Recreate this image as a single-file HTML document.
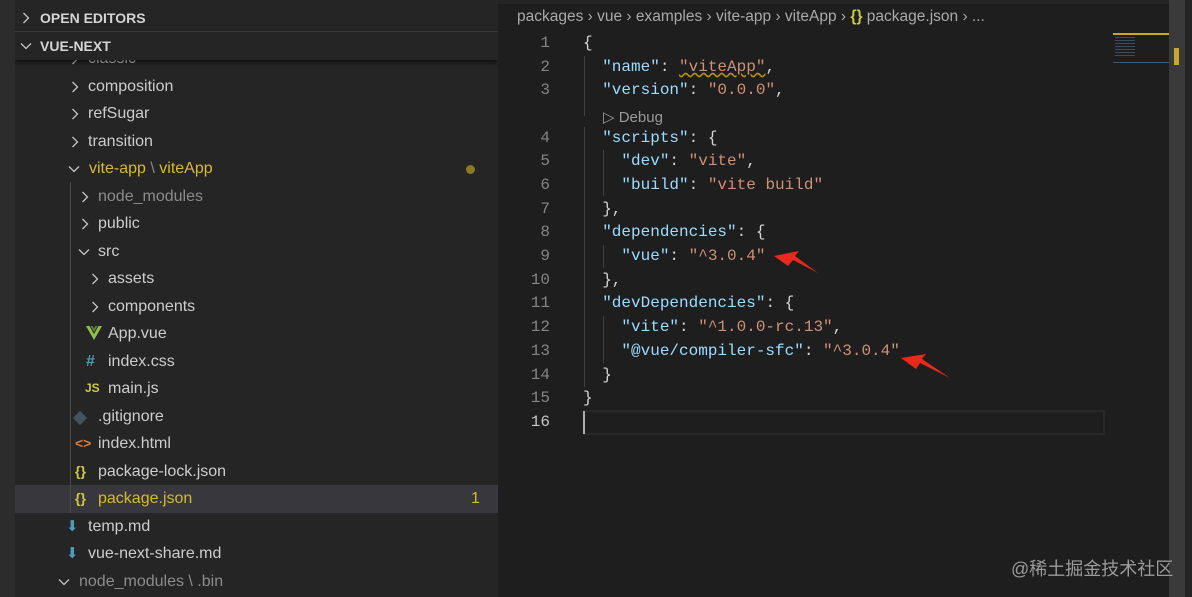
<!DOCTYPE html>
<html><head><meta charset="utf-8"><style>
*{margin:0;padding:0;box-sizing:border-box}
body{width:1192px;height:597px;overflow:hidden;background:#1e1e1e;position:relative;font-family:"Liberation Sans",sans-serif}
#act{position:absolute;left:0;top:0;width:15px;height:597px;background:#2c2c2c}
#side{position:absolute;left:15px;top:0;width:483px;height:597px;background:#252526;overflow:hidden}
.hdr{position:absolute;left:0;width:483px;height:28px;color:#d4d4d4;font-weight:bold;font-size:14px;line-height:28px}
.hdr span,.hdr svg{position:absolute}
.row{position:absolute;left:0;width:483px;height:27.5px;font-size:16px;line-height:27.5px;color:#cccccc;white-space:nowrap}
.row span,.row svg{position:absolute}
.row svg{top:8px}
.guide{position:absolute;width:1px;background:#4a4a4a}
#ed{position:absolute;left:498px;top:0;width:694px;height:597px;background:#1e1e1e}
.bc{position:absolute;left:19px;top:8px;font-size:15.5px;color:#a9a9a9;white-space:nowrap}
.ln{position:absolute;left:0;width:52px;text-align:right;color:#858585;font-family:"Liberation Mono",monospace;font-size:16px}
.cd{position:absolute;left:85px;font-family:"Liberation Mono",monospace;font-size:16px;color:#d4d4d4;white-space:pre}
.k{color:#9cdcfe}.s{color:#ce9178}
</style></head><body>
<svg width="0" height="0" style="position:absolute"><defs>
<symbol id="r" viewBox="0 0 12 12"><path d="M3.5 1 L8.5 6 L3.5 11" fill="none" stroke="#c5c5c5" stroke-width="1.3"/></symbol>
<symbol id="d" viewBox="0 0 12 12"><path d="M1 3.5 L6 8.5 L11 3.5" fill="none" stroke="#c5c5c5" stroke-width="1.3"/></symbol>
</defs></svg>
<div id="act"></div>
<div id="side">
<div class="hdr" style="top:4px;border-bottom:1px solid #3c3c3c"><svg width="12" height="12" style="left:5px;top:8px"><use href="#r"/></svg><span style="left:25px">OPEN EDITORS</span></div>
<div class="hdr" style="top:32px;background:#252526;box-shadow:0 3px 4px rgba(0,0,0,.5);z-index:2"><svg width="12" height="12" style="left:5px;top:8px"><use href="#d"/></svg><span style="left:25px">VUE-NEXT</span></div>
<div class="row" style="top:45px"><svg width="12" height="12" style="left:54px"><use href="#r"/></svg><span style="left:73px">classic</span></div>
<div class="row" style="top:72.5px"><svg width="12" height="12" style="left:54px"><use href="#r"/></svg><span style="left:73px">composition</span></div>
<div class="row" style="top:100px"><svg width="12" height="12" style="left:54px"><use href="#r"/></svg><span style="left:73px">refSugar</span></div>
<div class="row" style="top:127.5px"><svg width="12" height="12" style="left:54px"><use href="#r"/></svg><span style="left:73px">transition</span></div>
<div class="row" style="top:155px;color:#d7ba2d"><svg width="12" height="12" style="left:53px"><use href="#d"/></svg><span style="left:74px">vite-app <span style="position:static;color:#888">\</span> viteApp</span><span style="left:451px;top:10px;width:9px;height:9px;border-radius:50%;background:#8a7a22"></span></div>
<div class="guide" style="left:55px;top:182px;height:330px"></div>
<div class="row" style="top:182.5px;color:#8c8c8c"><svg width="12" height="12" style="left:64px"><use href="#r"/></svg><span style="left:83px">node_modules</span></div>
<div class="row" style="top:210px"><svg width="12" height="12" style="left:64px"><use href="#r"/></svg><span style="left:83px">public</span></div>
<div class="row" style="top:237.5px"><svg width="12" height="12" style="left:63px"><use href="#d"/></svg><span style="left:83px">src</span></div>
<div class="row" style="top:265px"><svg width="12" height="12" style="left:74px"><use href="#r"/></svg><span style="left:93px">assets</span></div>
<div class="row" style="top:292.5px"><svg width="12" height="12" style="left:74px"><use href="#r"/></svg><span style="left:93px">components</span></div>
<div class="row" style="top:320px"><svg width="16" height="14" style="left:71px;top:6px" viewBox="0 0 16 14"><path d="M0 0 L8 14 L16 0 L12.5 0 L8 8 L3.5 0Z" fill="#8dc149"/><path d="M4.5 0 L8 6 L11.5 0 L9.5 0 L8 2.7 L6.5 0Z" fill="#5a8a3a"/></svg><span style="left:93px">App.vue</span></div>
<div class="row" style="top:347.5px"><span style="left:71px;color:#519aba;font-weight:bold">#</span><span style="left:93px">index.css</span></div>
<div class="row" style="top:375px"><span style="left:70px;color:#cbcb41;font-weight:bold;font-size:12px">JS</span><span style="left:93px">main.js</span></div>
<div class="row" style="top:402.5px"><span style="left:60px;top:10px;width:10px;height:10px;background:#41535b;transform:rotate(45deg)"></span><span style="left:83px">.gitignore</span></div>
<div class="row" style="top:430px"><span style="left:60px;color:#e37933;font-weight:bold;font-size:14px">&lt;&gt;</span><span style="left:83px">index.html</span></div>
<div class="row" style="top:457.5px"><span style="left:60px;color:#cbcb41;font-weight:bold;font-size:14px">{}</span><span style="left:83px">package-lock.json</span></div>
<div class="row" style="top:485px;background:#37373d;color:#d7ba2d"><div class="guide" style="left:55px;top:0;height:27.5px"></div><span style="left:60px;color:#cbcb41;font-weight:bold;font-size:14px">{}</span><span style="left:83px">package.json</span><span style="left:456px">1</span></div>
<div class="row" style="top:512.5px"><span style="left:51px;color:#519aba;font-size:15px">&#x2B07;</span><span style="left:73px">temp.md</span></div>
<div class="row" style="top:540px"><span style="left:51px;color:#519aba;font-size:15px">&#x2B07;</span><span style="left:73px">vue-next-share.md</span></div>
<div class="row" style="top:567.5px;color:#8c8c8c"><svg width="12" height="12" style="left:43px"><use href="#d"/></svg><span style="left:64px">node_modules \ .bin</span></div>
</div>
<div id="ed">
<div style="position:absolute;left:0;top:0;width:694px;height:4px;background:#252526"></div>
<div class="bc">packages › vue › examples › vite-app › viteApp › <span style="color:#cbcb41;font-weight:bold">{}</span> package.json › ...</div>
<div style="position:absolute;left:85px;top:410px;width:522px;height:25px;border:2px solid #282828"></div>
<div style="position:absolute;left:85px;top:411px;width:2px;height:23px;background:#aeafad"></div>
<div class="guide" style="left:86px;top:56px;height:60px;background:#404040"></div>
<div class="guide" style="left:86px;top:127px;height:260px;background:#404040"></div>
<div class="guide" style="left:105px;top:150px;height:46px;background:#404040"></div>
<div class="guide" style="left:105px;top:245px;height:23px;background:#404040"></div>
<div class="guide" style="left:105px;top:316px;height:47px;background:#404040"></div>
<div class="ln" style="top:34px">1</div><div class="cd" style="top:34px">{</div>
<div class="ln" style="top:58px">2</div><div class="cd" style="top:58px">  <span class="k">"name"</span>: <span class="s" style="text-decoration:underline wavy #b89500">"viteApp"</span>,</div>
<div class="ln" style="top:81px">3</div><div class="cd" style="top:81px">  <span class="k">"version"</span>: <span class="s">"0.0.0"</span>,</div>
<div style="position:absolute;left:105px;top:108px;font-size:15px;color:#999">▷ Debug</div>
<div class="ln" style="top:129px">4</div><div class="cd" style="top:129px">  <span class="k">"scripts"</span>: {</div>
<div class="ln" style="top:152px">5</div><div class="cd" style="top:152px">    <span class="k">"dev"</span>: <span class="s">"vite"</span>,</div>
<div class="ln" style="top:176px">6</div><div class="cd" style="top:176px">    <span class="k">"build"</span>: <span class="s">"vite build"</span></div>
<div class="ln" style="top:200px">7</div><div class="cd" style="top:200px">  },</div>
<div class="ln" style="top:223px">8</div><div class="cd" style="top:223px">  <span class="k">"dependencies"</span>: {</div>
<div class="ln" style="top:247px">9</div><div class="cd" style="top:247px">    <span class="k">"vue"</span>: <span class="s">"^3.0.4"</span></div>
<div class="ln" style="top:271px">10</div><div class="cd" style="top:271px">  },</div>
<div class="ln" style="top:294px">11</div><div class="cd" style="top:294px">  <span class="k">"devDependencies"</span>: {</div>
<div class="ln" style="top:318px">12</div><div class="cd" style="top:318px">    <span class="k">"vite"</span>: <span class="s">"^1.0.0-rc.13"</span>,</div>
<div class="ln" style="top:342px">13</div><div class="cd" style="top:342px">    <span class="k">"@vue/compiler-sfc"</span>: <span class="s">"^3.0.4"</span></div>
<div class="ln" style="top:366px">14</div><div class="cd" style="top:366px">  }</div>
<div class="ln" style="top:389px">15</div><div class="cd" style="top:389px">}</div>
<div class="ln" style="top:413px;color:#c6c6c6">16</div>
<svg style="position:absolute;left:0;top:0" width="694" height="597">
<polygon points="276,256 301,251 297,256 320,273 295,260 290,266" fill="#e8291c"/>
<polygon points="403,358 428,354 424,359 452,378 422,363 418,369" fill="#e8291c"/>
</svg>
<div style="position:absolute;left:615px;top:33px;width:56px;height:2px;background:#c8a82a"></div>
<div style="position:absolute;left:617px;top:37px;width:20px;height:20px;opacity:.5;background:repeating-linear-gradient(#5a7a9a 0 1px,transparent 1px 3px)"></div>
<div style="position:absolute;left:615px;top:62px;width:56px;height:1px;background:#3a5a7a"></div>
<div style="position:absolute;left:671px;top:0;width:16px;height:597px;background:#3a3a3a"></div>
<div style="position:absolute;left:676px;top:48px;width:5px;height:17px;background:#c8a82a"></div>
<div style="position:absolute;left:687px;top:0;width:7px;height:597px;background:#252526"></div>
<div style="position:absolute;left:513px;top:555px;font-size:18px;color:#9a9a9a;font-family:'Liberation Sans','Noto Sans CJK SC',sans-serif">@稀土掘金技术社区</div>
</div>
</body></html>
